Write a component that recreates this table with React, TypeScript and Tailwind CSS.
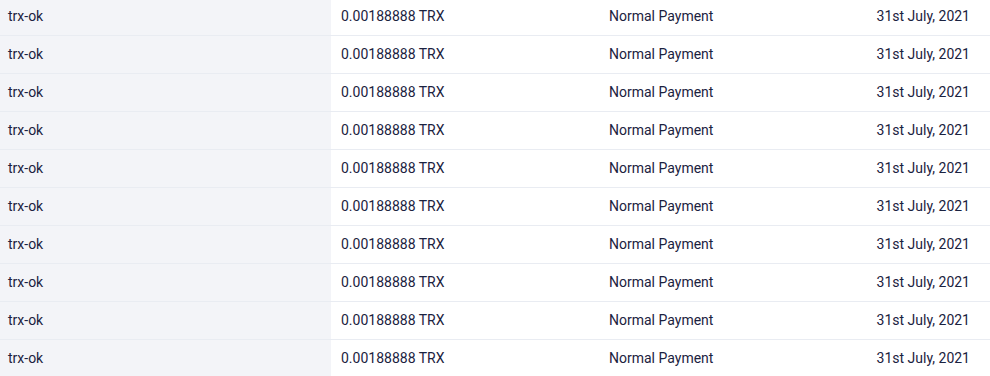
const rows = Array.from({ length: 10 }, () => ({
  name: "trx-ok",
  amount: "0.00188888 TRX",
  type: "Normal Payment",
  date: "31st July, 2021",
}));

export default function App() {
  return (
    <div
      className="w-[990px] h-[376px] overflow-hidden bg-white text-[14px] text-[#1b2240]"
      style={{ fontFamily: "Roboto, 'Liberation Sans', sans-serif" }}
    >
      <div className="-mt-[2px]">
        {rows.map((r, i) => (
          <div
            key={i}
            className="grid grid-cols-[331px_268px_1fr_auto] h-[38px] border-b border-[#e9ecf2] items-stretch"
          >
            <div className="bg-[#f3f4f8] pl-[8px] flex items-center">{r.name}</div>
            <div className="pl-[10px] flex items-center">{r.amount}</div>
            <div className="pl-[10px] flex items-center">{r.type}</div>
            <div className="pr-[20px] flex items-center justify-end">{r.date}</div>
          </div>
        ))}
      </div>
    </div>
  );
}
